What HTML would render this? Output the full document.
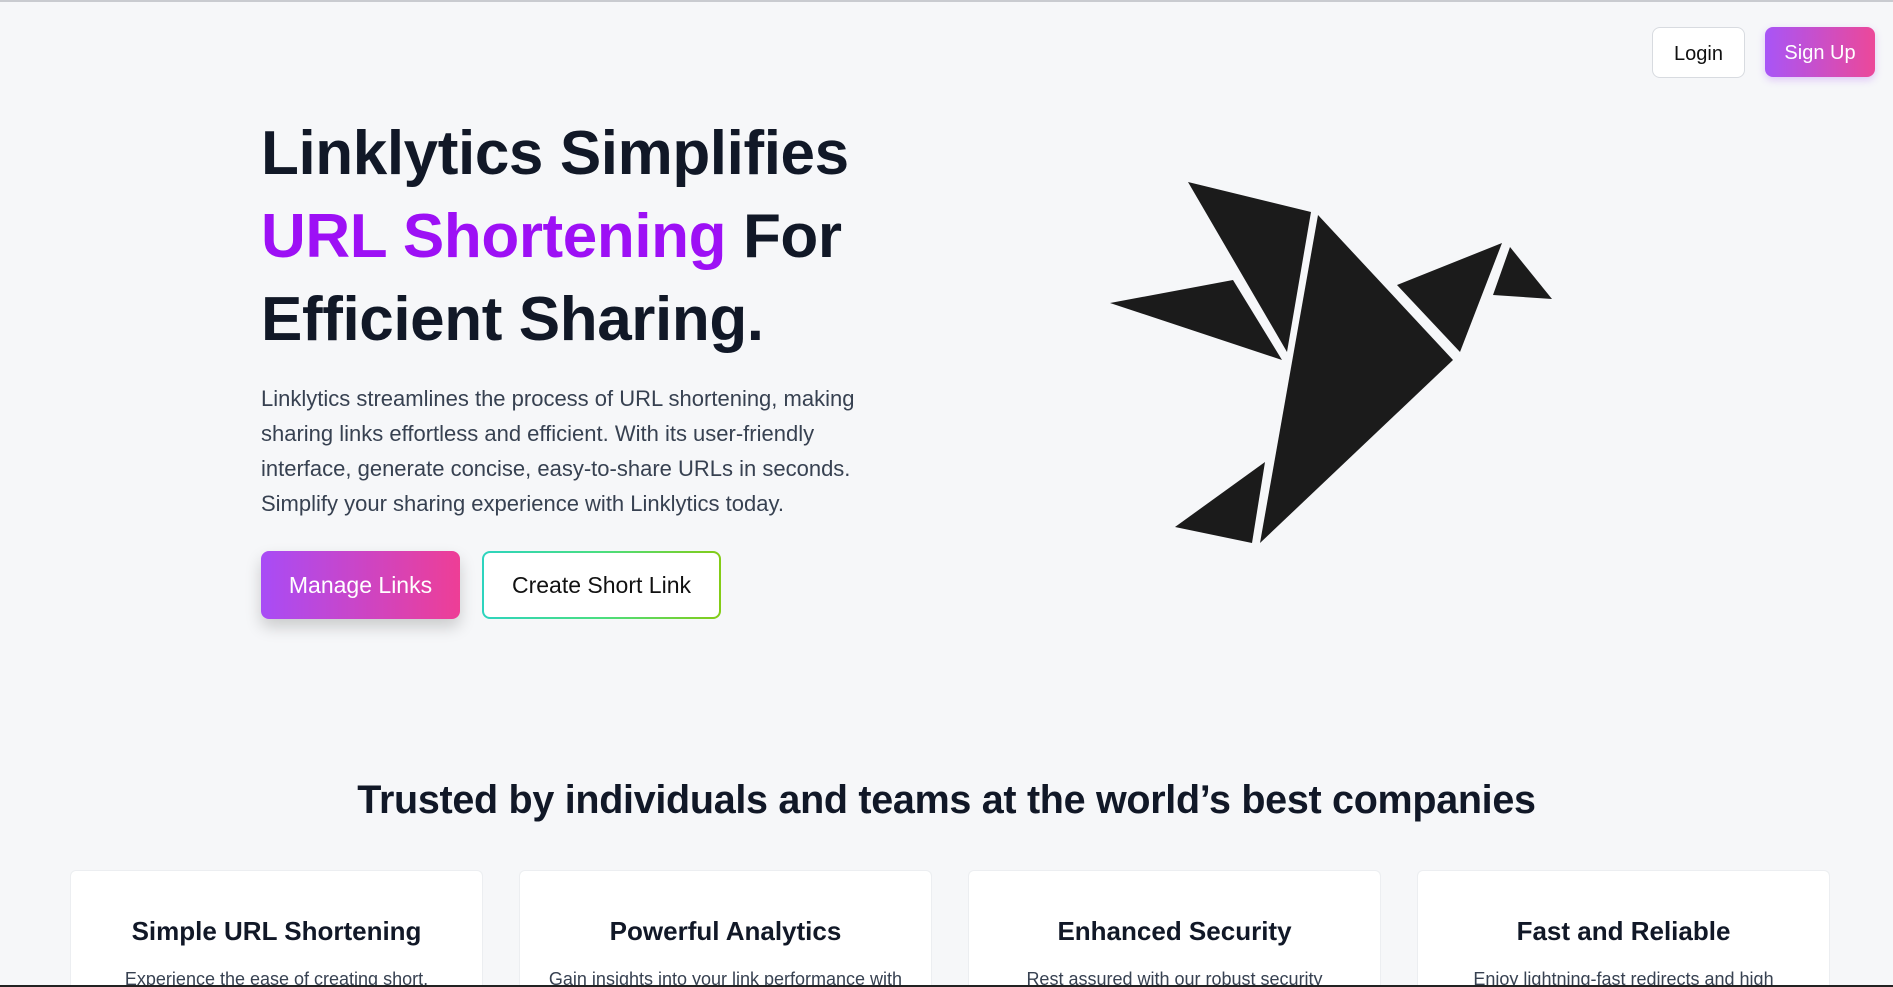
<!DOCTYPE html>
<html><head><meta charset="utf-8"><style>
*{margin:0;padding:0;box-sizing:border-box}
html,body{width:1893px;height:987px;overflow:hidden;background:#f6f7f9;font-family:"Liberation Sans",sans-serif;color:#111827;position:relative}
.top{position:absolute;left:0;top:0;width:1893px;height:2px;background:#c9cbd0}
.bot{position:absolute;left:0;top:985px;width:1893px;height:2px;background:#222}
.btn{position:absolute;display:flex;align-items:center;justify-content:center;border-radius:8px}
.login{left:1652px;top:27px;width:93px;height:51px;background:#fff;border:1px solid #d8dbe0;font-size:20px;color:#111;padding-top:3px}
.signup{left:1765px;top:27px;width:110px;height:50px;background:linear-gradient(90deg,#a855f7,#ec4899);color:#fff;font-size:20px;box-shadow:0 3px 8px rgba(168,85,247,.3);padding-top:2px}
h1{position:absolute;left:261px;top:112px;font-size:62px;line-height:83px;font-weight:700;letter-spacing:-0.4px;color:#111827}
h1 span{color:#9d10f5}
p.d{position:absolute;left:261px;top:381px;font-size:22px;line-height:35px;color:#374151;white-space:nowrap}
.manage{left:261px;top:551px;width:199px;height:68px;background:linear-gradient(90deg,#a84cf6,#ee3e96);color:#fff;font-size:23px;box-shadow:0 8px 16px rgba(0,0,0,.18)}
.create{left:482px;top:551px;width:239px;height:68px;padding:2px;background:linear-gradient(90deg,#2dd4bf,#4ade80,#84cc16)}
.create div{width:100%;height:100%;background:#fff;border-radius:6px;display:flex;align-items:center;justify-content:center;font-size:23px;color:#111}
h2{position:absolute;left:0;width:1893px;top:778px;text-align:center;font-size:39.5px;font-weight:700;color:#111827;letter-spacing:-0.3px}
.card{position:absolute;top:870px;width:413px;height:117px;overflow:hidden;background:#fff;border:1px solid #eceef1;border-bottom:none;border-radius:6px 6px 0 0;text-align:center}
.card h3{margin-top:45px;font-size:26px;font-weight:700;color:#111827}
.card p{margin-top:22px;font-size:18px;color:#374151}
</style></head><body>
<div class="top"></div>
<div class="btn login">Login</div>
<div class="btn signup">Sign Up</div>
<h1>Linklytics Simplifies<br><span>URL Shortening</span> For<br>Efficient Sharing.</h1>
<p class="d">Linklytics streamlines the process of URL shortening, making<br>sharing links effortless and efficient. With its user-friendly<br>interface, generate concise, easy-to-share URLs in seconds.<br>Simplify your sharing experience with Linklytics today.</p>
<div class="btn manage">Manage Links</div>
<div class="btn create"><div>Create Short Link</div></div>
<svg style="position:absolute;left:0;top:0" width="1893" height="987">
<g fill="#1b1b1b">
<polygon points="1188,182 1311,212 1287,352"/>
<polygon points="1110,303 1233,280 1282,360"/>
<polygon points="1318,215 1453,360 1260,543"/>
<polygon points="1397,285 1502,243 1460,352"/>
<polygon points="1510,247 1552,299 1493,295"/>
<polygon points="1265,462 1252,543 1175,527"/>
</g></svg>
<h2>Trusted by individuals and teams at the world’s best companies</h2>
<div class="card" style="left:70px"><h3>Simple URL Shortening</h3><p>Experience the ease of creating short,</p></div>
<div class="card" style="left:519px"><h3>Powerful Analytics</h3><p>Gain insights into your link performance with</p></div>
<div class="card" style="left:968px"><h3>Enhanced Security</h3><p>Rest assured with our robust security</p></div>
<div class="card" style="left:1417px"><h3>Fast and Reliable</h3><p>Enjoy lightning-fast redirects and high</p></div>
<div class="bot"></div>
</body></html>
